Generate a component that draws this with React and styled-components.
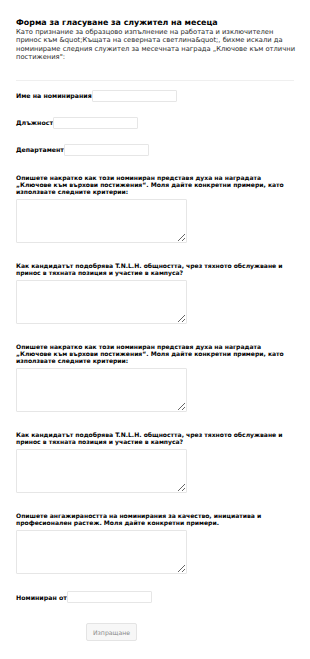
import React from 'react';
import styled, { createGlobalStyle } from 'styled-components';

const GlobalStyle = createGlobalStyle`
  html, body {
    margin: 0;
    padding: 0;
    background: #ffffff;
  }
  body {
    font-family: "DejaVu Sans", Verdana, sans-serif;
    color: #111;
  }
`;

const Page = styled.div`
  width: 310px;
  box-sizing: border-box;
  padding: 17px 16px 20px 16px;
`;

const Header = styled.div`
  padding-bottom: 18px;
  border-bottom: 1px solid #efefef;
  margin-bottom: 9px;
`;

const Title = styled.h1`
  margin: 0;
  font-size: 7.9px;
  line-height: 11px;
  font-weight: bold;
  color: #000;
`;

const Intro = styled.p`
  margin: 0;
  font-size: 6.75px;
  line-height: 8.4px;
  color: #2b2b2b;
  white-space: nowrap;
`;

const Form = styled.form`
  display: flex;
  flex-direction: column;
`;

const Field = styled.div`
  display: flex;
  flex-direction: ${p => (p.$inline ? 'row' : 'column')};
  align-items: ${p => (p.$inline ? 'center' : 'flex-start')};
  margin-top: ${p => p.$gap}px;
`;

const Label = styled.label`
  font-size: ${p => (p.$inline ? '6.25px' : '6.05px')};
  line-height: 7px;
  font-weight: bold;
  color: #000;
  margin-bottom: ${p => (p.$inline ? 0 : '4.5px')};
  white-space: ${p => (p.$inline ? 'nowrap' : 'normal')};
`;

const TextInput = styled.input`
  width: 85px;
  height: 12px;
  box-sizing: border-box;
  border: 1px solid #e6e6e6;
  border-radius: 1px;
  padding: 0 2px;
  font-size: 7px;
  font-family: inherit;
  background: #fff;
  outline: none;
`;

const TextArea = styled.textarea`
  width: 171px;
  height: 44px;
  box-sizing: border-box;
  border: 1px solid #e6e6e6;
  border-radius: 1px;
  padding: 2px;
  font-size: 7px;
  font-family: inherit;
  background: #fff;
  outline: none;
  display: block;
`;

const SubmitButton = styled.button`
  margin-top: 20px;
  margin-left: 70px;
  align-self: flex-start;
  width: 51px;
  height: 18px;
  box-sizing: border-box;
  border: 1px solid #e4e4e4;
  border-radius: 2px;
  background: #f7f7f7;
  color: #8a8a8a;
  font-family: inherit;
  font-size: 6.2px;
  padding: 0;
`;

const q1 = 'Опишете накратко как този номиниран представя духа на наградата „Ключове към върхови постижения“. Моля дайте конкретни примери, като използвате следните критерии:';
const q2 = 'Как кандидатът подобрява T.N.L.H. общността, чрез тяхното обслужване и принос в тяхната позиция и участие в кампуса?';

const fields = [
  { label: 'Име на номинирания', inline: true, gap: 0 },
  { label: 'Длъжност', inline: true, gap: 15 },
  { label: 'Департамент', inline: true, gap: 15 },
  { label: q1, gap: 18 },
  { label: q2, gap: 18.5 },
  { label: q1, gap: 18.5 },
  { label: q2, gap: 18.5 },
  { label: 'Опишете ангажираността на номинирания за качество, инициатива и професионален растеж. Моля дайте конкретни примери.', gap: 18.5 },
  { label: 'Номиниран от', inline: true, gap: 17 },
];

export default function App() {
  return (
    <>
      <GlobalStyle />
      <Page>
        <Header>
          <Title>Форма за гласуване за служител на месеца</Title>
          <Intro>
            Като признание за образцово изпълнение на работата и изключителен<br />
            принос към &amp;quot;Къщата на северната светлина&amp;quot;, бихме искали да<br />
            номинираме следния служител за месечната награда „Ключове към отлични<br />
            постижения":
          </Intro>
        </Header>
        <Form onSubmit={e => e.preventDefault()}>
          {fields.map((f, i) => (
            <Field key={i} $inline={f.inline} $gap={f.gap}>
              <Label $inline={f.inline}>{f.label}</Label>
              {f.inline ? <TextInput type="text" /> : <TextArea />}
            </Field>
          ))}
          <SubmitButton type="submit">Изпращане</SubmitButton>
        </Form>
      </Page>
    </>
  );
}
